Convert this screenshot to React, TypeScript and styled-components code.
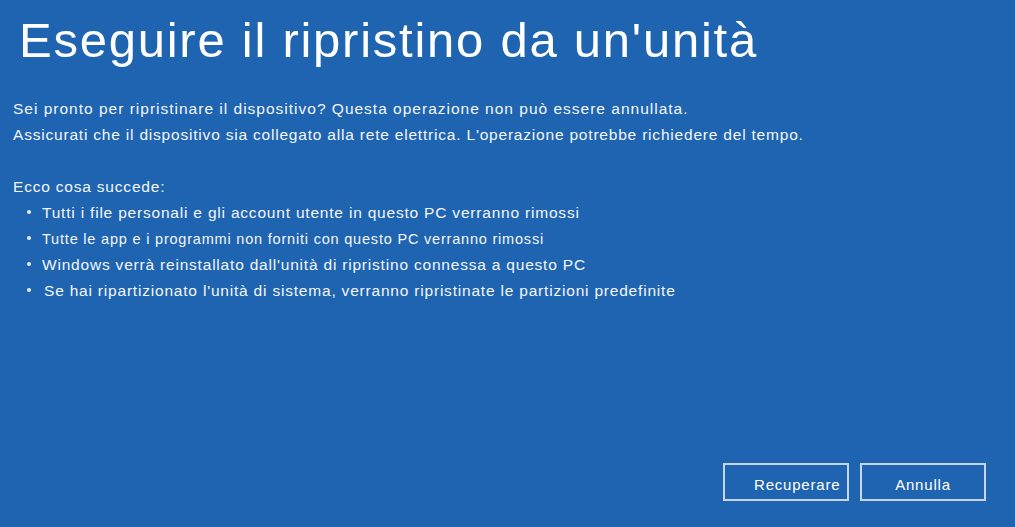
import React from "react";
import styled, { createGlobalStyle } from "styled-components";

const Global = createGlobalStyle`
  html, body { margin: 0; padding: 0; background: #1f64b0; }
  body { font-family: "Liberation Sans", Arial, sans-serif; color: #fff; }
`;

const Screen = styled.div`
  width: 1015px;
  height: 527px;
  background: #1f64b0;
  display: flex;
  flex-direction: column;
  box-sizing: border-box;
  padding-top: 5px;
  overflow: hidden;
`;

const Title = styled.h1`
  margin: 0 0 0 19px;
  font-weight: 400;
  font-size: 49px;
  line-height: 70px;
  letter-spacing: 1.75px;
  color: #fff;
  white-space: nowrap;
`;

const Body = styled.div`
  margin: 21px 0 0 13px;
  font-size: 15.5px;
  letter-spacing: 0.8px;
  color: #f3f6fb;
`;

const Para = styled.p<{ $spacing?: number }>`
  margin: 0;
  line-height: 26px;
  white-space: nowrap;
  letter-spacing: ${(p) => p.$spacing ?? 0.8}px;
`;

const Heading = styled.p`
  margin: 26px 0 0 0;
  line-height: 26px;
`;

const List = styled.ul`
  list-style: none;
  margin: 0;
  padding: 0 0 0 14px;
`;

const Item = styled.li<{ $size?: number }>`
  display: flex;
  align-items: baseline;
  line-height: 26px;
  white-space: nowrap;
  font-size: ${(p) => p.$size ?? 15.5}px;
`;

const Dot = styled.span<{ $indent?: number }>`
  flex: none;
  width: 4px;
  height: 4px;
  border-radius: 50%;
  background: #e8eef7;
  margin-right: ${(p) => 11 + (p.$indent ?? 0)}px;
  position: relative;
  top: -4px;
`;

const Footer = styled.div`
  margin-top: auto;
  display: flex;
  justify-content: flex-end;
  gap: 11px;
  padding: 0 29px 26px 0;
`;

const Button = styled.button<{ $align?: "left" | "center" }>`
  width: 126px;
  height: 38px;
  box-sizing: border-box;
  background: transparent;
  border: 2px solid #c6d5ea;
  color: #fff;
  font-family: "Liberation Sans", Arial, sans-serif;
  font-size: 15px;
  letter-spacing: 0.8px;
  padding: 4px 0 0 ${(p) => (p.$align === "left" ? 29 : 0)}px;
  text-align: ${(p) => p.$align ?? "center"};
`;

const items: { text: string; size?: number; indent?: number }[] = [
  { text: "Tutti i file personali e gli account utente in questo PC verranno rimossi" },
  { text: "Tutte le app e i programmi non forniti con questo PC verranno rimossi", size: 14.5 },
  { text: "Windows verrà reinstallato dall'unità di ripristino connessa a questo PC" },
  { text: "Se hai ripartizionato l'unità di sistema, verranno ripristinate le partizioni predefinite", indent: 2 },
];

export default function App() {
  return (
    <>
      <Global />
      <Screen>
        <Title>Eseguire il ripristino da un'unità</Title>
        <Body>
          <Para $spacing={1}>Sei pronto per ripristinare il dispositivo? Questa operazione non può essere annullata.</Para>
          <Para>Assicurati che il dispositivo sia collegato alla rete elettrica. L'operazione potrebbe richiedere del tempo.</Para>
          <Heading>Ecco cosa succede:</Heading>
          <List>
            {items.map((it) => (
              <Item key={it.text} $size={it.size}>
                <Dot $indent={it.indent} />
                {it.text}
              </Item>
            ))}
          </List>
        </Body>
        <Footer>
          <Button $align="left">Recuperare</Button>
          <Button>Annulla</Button>
        </Footer>
      </Screen>
    </>
  );
}
